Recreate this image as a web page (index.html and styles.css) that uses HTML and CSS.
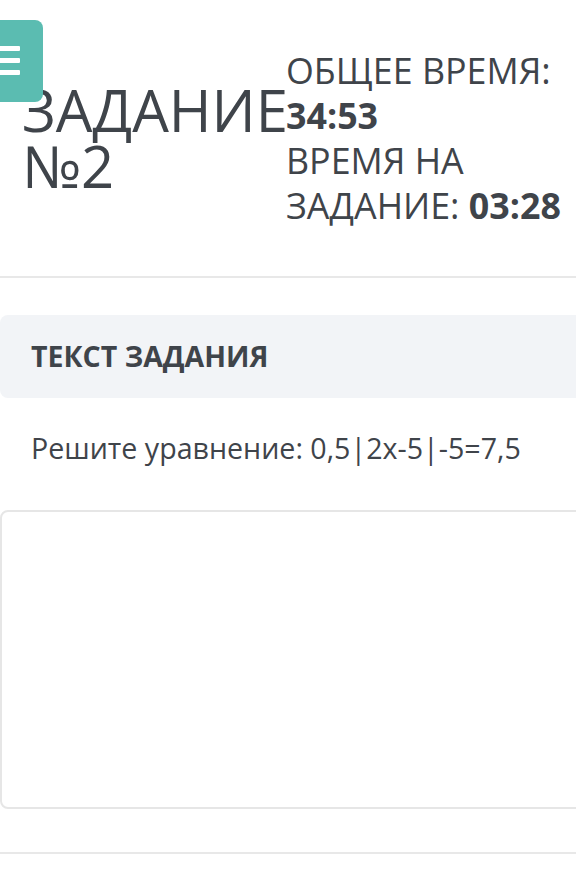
FILE: index.html
```html
<!DOCTYPE html>
<html lang="ru">
<head>
  <meta charset="UTF-8">
  <meta name="viewport" content="width=device-width, initial-scale=1.0">
  <title>Задание №2</title>
  <link rel="stylesheet" href="styles.css">
</head>
<body>
  <!-- кнопка меню -->
  <button class="menu-btn" aria-label="Меню">
    <span></span><span></span><span></span>
  </button>

  <!-- шапка задания -->
  <div class="task-head">
    <h1 class="task-title">ЗАДАНИЕ №2</h1>
    <div class="timers">
      <div>ОБЩЕЕ ВРЕМЯ: <b>34:53</b></div>
      <div>ВРЕМЯ НА ЗАДАНИЕ: <b>03:28</b></div>
    </div>
  </div>

  <hr class="divider">

  <!-- текст задания -->
  <div class="card">
    <div class="card-header">ТЕКСТ ЗАДАНИЯ</div>
    <div class="card-body">Решите уравнение: 0,5|2x-5|-5=7,5</div>
  </div>

  <!-- поле ответа -->
  <div class="answer"></div>

  <hr class="divider bottom">
</body>
</html>
```

FILE: styles.css
```css
* {
  margin: 0;
  padding: 0;
  box-sizing: border-box;
}

body {
  font-family: 'Open Sans', 'Noto Sans', sans-serif;
  color: #3f444a;
  background: #fff;
  overflow-x: hidden;
  position: relative;
}

/* кнопка меню */
.menu-btn {
  position: absolute;
  top: 20px;
  left: -20px;
  width: 63px;
  height: 82px;
  background: #5bbcb1;
  border: none;
  border-radius: 8px;
  display: flex;
  flex-direction: column;
  justify-content: flex-start;
  align-items: flex-end;
  gap: 7px;
  padding: 26px 23px 0 0;
}

.menu-btn span {
  display: block;
  width: 40px;
  height: 5px;
  background: #fff;
  border-radius: 1px;
}

/* шапка */
.task-head {
  display: grid;
  grid-template-columns: 264px 1fr;
  align-items: center;
  padding: 48px 0 48px 22px;
}

.task-title {
  font-size: 58px;
  font-weight: 400;
  line-height: 56px;
}

.timers {
  font-size: 35.8px;
  line-height: 45px;
}

.timers b {
  font-weight: 700;
}

.divider {
  border: none;
  border-top: 2px solid #e8e8e8;
}

/* карточка */
.card {
  margin-top: 37px;
  width: calc(100% + 20px);
}

.card-header {
  background: #f2f4f7;
  border-radius: 8px 0 0 8px;
  padding: 26px 31px;
  font-size: 28.5px;
  font-weight: 700;
  line-height: 31px;
  height: 83px;
}

.card-body {
  padding: 28px 31px 40px;
  font-size: 28.6px;
  line-height: 44px;
}

.answer {
  width: calc(100% + 20px);
  height: 299px;
  border: 2px solid #e6e6e6;
  border-radius: 8px;
}

.divider.bottom {
  margin-top: 43px;
}
```
